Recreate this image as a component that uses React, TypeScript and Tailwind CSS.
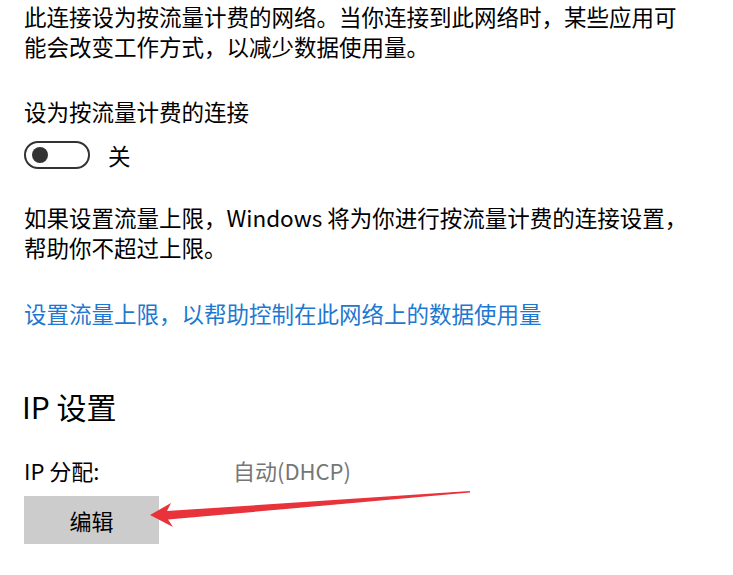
import React from 'react';

const font = { fontFamily: '"Noto Sans CJK SC", "Microsoft YaHei", sans-serif' };

export default function App() {
  return (
    <div className="relative w-[733px] h-[575px] bg-white overflow-hidden text-black" style={font}>
      <div className="pl-6 pt-[1px]">
        {/* Metered connection description */}
        <p className="text-[22.5px] leading-[30px] whitespace-nowrap">
          此连接设为按流量计费的网络。当你连接到此网络时，某些应用可
          <br />
          能会改变工作方式，以减少数据使用量。
        </p>

        <p className="mt-[35px] text-[22.5px] leading-[30px]">设为按流量计费的连接</p>

        {/* Toggle */}
        <div className="mt-[15px] flex items-center h-[28px]">
          <div className="w-[66px] h-[28px] rounded-full border-[2.5px] border-[#333] flex items-center pl-[6px]">
            <div className="w-[16px] h-[16px] rounded-full bg-[#333]" />
          </div>
          <span className="ml-[18px] text-[22.5px] leading-[30px]">关</span>
        </div>

        <p className="mt-[33px] text-[22.5px] leading-[30px] whitespace-nowrap">
          如果设置流量上限，Windows 将为你进行按流量计费的连接设置，
          <br />
          帮助你不超过上限。
        </p>

        <p className="mt-[36px] text-[22.5px] leading-[30px] text-[#1f78cf]">设置流量上限，以帮助控制在此网络上的数据使用量</p>

        {/* IP settings */}
        <h2 className="mt-[58px] text-[30px] leading-[40px] -ml-[2px]">IP 设置</h2>

        <div className="mt-[29px] flex text-[22px] leading-[30px]">
          <span className="w-[209px]">IP 分配:</span>
          <span className="text-[#767676]">自动(DHCP)</span>
        </div>

        <button className="mt-[11px] w-[135px] h-[48px] bg-[#cccccc] text-[22px] leading-[30px] text-black flex items-center justify-center">
          编辑
        </button>
      </div>

      {/* Annotation arrow */}
      <svg className="absolute left-0 top-0" width="733" height="575" viewBox="0 0 733 575">
        <polygon
          points="150,515 171,503 167,511 470,491 470,492.6 168,519.5 173,527"
          fill="#e8333a"
        />
      </svg>
    </div>
  );
}
